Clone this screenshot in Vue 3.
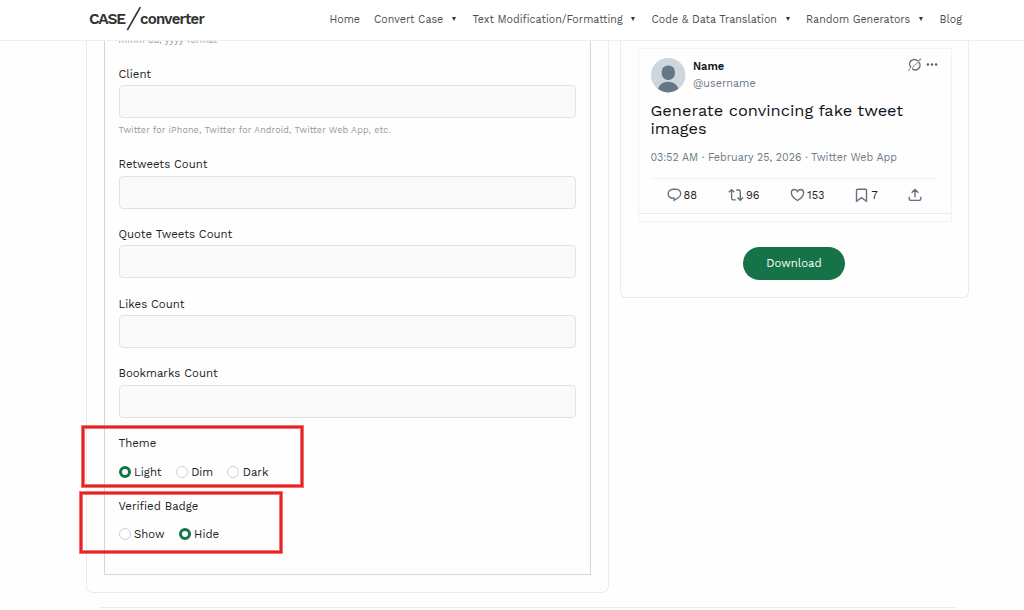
<script setup>
import { ref } from 'vue'

const navItems = [
  { label: 'Home', cls: 'home' },
  { label: 'Convert Case', cls: 'case', menu: true },
  { label: 'Text Modification/Formatting', cls: 'text', menu: true },
  { label: 'Code & Data Translation', cls: 'code', menu: true },
  { label: 'Random Generators', cls: 'random', menu: true },
  { label: 'Blog', cls: 'blog' }
]

const fields = ref([
  { id: 'client', label: 'Client', value: '', hint: 'Twitter for iPhone, Twitter for Android, Twitter Web App, etc.' },
  { id: 'retweets', label: 'Retweets Count', value: '' },
  { id: 'quotes', label: 'Quote Tweets Count', value: '' },
  { id: 'likes', label: 'Likes Count', value: '' },
  { id: 'bookmarks', label: 'Bookmarks Count', value: '' }
])

const theme = ref('Light')
const badge = ref('Hide')
</script>

<template>
  <div class="page">
    <header class="header">
      <a class="logo">
        <span class="logo-case">CASE</span>
        <svg class="logo-slash" width="16" height="26" viewBox="0 0 16 26">
          <path d="M1.3 24.2 14.3 1.2" stroke="#333" stroke-width="1.7" fill="none" />
        </svg>
        <span class="logo-conv">converter</span>
      </a>
      <nav class="nav">
        <a v-for="item in navItems" :key="item.label" class="nav-item" :class="item.cls">
          <span>{{ item.label }}</span>
          <i v-if="item.menu" class="caret"></i>
        </a>
      </nav>
    </header>

    <main class="main">
      <div class="columns">
        <section class="card form-card">
          <form class="form" @submit.prevent>
            <p class="hint date-hint">mmm dd, yyyy format</p>
            <div v-for="f in fields" :key="f.id" class="field">
              <label :for="f.id">{{ f.label }}</label>
              <input :id="f.id" v-model="f.value" type="text">
              <p v-if="f.hint" class="hint">{{ f.hint }}</p>
            </div>
            <div class="group">
              <div>Theme</div>
              <div class="radios">
                <label v-for="t in ['Light', 'Dim', 'Dark']" :key="t" class="radio">
                  <input v-model="theme" type="radio" name="theme" :value="t">{{ t }}
                </label>
              </div>
            </div>
            <div class="group">
              <div>Verified Badge</div>
              <div class="radios">
                <label v-for="b in ['Show', 'Hide']" :key="b" class="radio">
                  <input v-model="badge" type="radio" name="badge" :value="b">{{ b }}
                </label>
              </div>
            </div>
          </form>
        </section>

        <section class="card preview-card">
          <div class="preview">
            <article class="tweet">
              <div class="tweet-head">
                <svg class="avatar" width="35" height="35" viewBox="0 0 35 35">
                  <defs>
                    <clipPath id="avatar-clip"><circle cx="17.2" cy="17.2" r="17.2" /></clipPath>
                  </defs>
                  <g clip-path="url(#avatar-clip)">
                    <rect width="35" height="35" fill="#ccd6dc" />
                    <rect x="10.7" y="7.5" width="13.2" height="14.4" rx="6.3" fill="#657786" />
                    <path d="M6.2 35C6.7 27.4 11.2 23.8 17.2 23.8S27.7 27.4 28.2 35Z" fill="#657786" />
                  </g>
                </svg>
                <div class="names">
                  <strong>Name</strong>
                  <span>@username</span>
                </div>
                <div class="head-icons">
                  <svg width="14" height="14" viewBox="0 0 14 14" fill="none" stroke="#607080">
                    <path d="M9.6 2.8A4.6 4.6 0 0 0 3 9.4M4.2 10.6A4.6 4.6 0 0 0 10.8 4.2" stroke-width="1.5" />
                    <path d="M.6 13C1.1 11.3 1.8 10.3 3 9.2M4.4 9.6 9.8 4.4C11.4 3.2 12.2 2.2 12.8.8L9.4 3.4" stroke-width=".8" />
                  </svg>
                  <svg width="12" height="4" viewBox="0 0 12 4" fill="#536471">
                    <circle cx="1.9" cy="1.5" r="1.25" />
                    <circle cx="6" cy="1.5" r="1.25" />
                    <circle cx="10.1" cy="1.5" r="1.25" />
                  </svg>
                </div>
              </div>
              <p class="tweet-text">Generate convincing fake tweet<br>images</p>
              <p class="tweet-meta">03:52 AM · February 25, 2026 · Twitter Web App</p>
              <div class="stats">
                <span class="stat">
                  <svg width="15" height="14" viewBox="0 0 15 14">
                    <path d="M6 1.2H9C11.8 1.2 13.7 3.2 13.7 5.7C13.7 7.5 12.8 8.8 11.2 9.8L7.1 12.3V10.2H6C3.2 10.2 1.2 8.2 1.2 5.7S3.2 1.2 6 1.2Z" />
                  </svg>88
                </span>
                <span class="stat">
                  <svg width="16" height="14" viewBox="0 0 16 14">
                    <path d="M.8 4.3 3.6 1.6 6.4 4.3M3.6 1.8V10.2Q3.6 11.9 5.3 11.9H7.8M8.2 2H10.6Q12.3 2 12.3 3.7V12.1M9.5 9.5 12.3 12.2 15.1 9.5" />
                  </svg>96
                </span>
                <span class="stat">
                  <svg width="15" height="14" viewBox="0 0 15 14">
                    <path d="M7.5 12.5C4.3 10.6 1.4 8 1.4 4.9C1.4 2.9 2.7 1.5 4.4 1.5C5.8 1.5 6.8 2.2 7.5 3.5C8.2 2.2 9.2 1.5 10.6 1.5C12.3 1.5 13.6 2.9 13.6 4.9C13.6 8 10.7 10.6 7.5 12.5Z" />
                  </svg>153
                </span>
                <span class="stat bookmark">
                  <svg width="13" height="15" viewBox="0 0 13 15">
                    <path d="M1.5 2.4Q1.5 1.2 2.7 1.2H10.3Q11.5 1.2 11.5 2.4V13.3L6.5 9.7 1.5 13.3Z" />
                  </svg>7
                </span>
                <span class="stat">
                  <svg width="14" height="14" viewBox="0 0 14 14">
                    <path d="M3.6 4.7 7 1.4 10.4 4.7M7 1.6V9.3M1.2 8.8V10.8Q1.2 12.3 2.7 12.3H11.3Q12.8 12.3 12.8 10.8V8.8" />
                  </svg>
                </span>
              </div>
            </article>
          </div>
          <button class="download">Download</button>
        </section>
      </div>
      <hr class="divider">
    </main>

    <!-- highlight frames over the two radio groups -->
    <div class="frame frame-theme"></div>
    <div class="frame frame-badge"></div>
  </div>
</template>

<style>
body {
  background: #fefefe;
}
</style>

<style scoped>
* {
  box-sizing: border-box;
}

.page {
  position: relative;
  display: flex;
  flex-direction: column;
  height: 610px;
  overflow: hidden;
  font-family: "Work Sans", Inter, "Liberation Sans", sans-serif;
  font-size: 11.4px;
  color: #222;
}

p {
  margin: 0;
}

.header {
  flex: none;
  display: flex;
  height: 41px;
  padding-left: 89px;
  border-bottom: 1px solid #efefef;
  background: #fff;
}

.logo {
  display: flex;
  align-items: center;
  width: 240.5px;
  height: 38px;
  color: #333;
  font-weight: 600;
  white-space: nowrap;
}

.logo-case {
  width: 37px;
  font-size: 15.5px;
  letter-spacing: -1.25px;
}

.logo-slash {
  flex: none;
  margin-right: -2px;
}

.logo-conv {
  font-size: 15px;
  letter-spacing: -0.75px;
}

.nav {
  display: flex;
  align-items: center;
  height: 38px;
}

.nav-item {
  display: flex;
  align-items: center;
  justify-content: space-between;
  color: #4d4d4d;
  font-size: 10.7px;
  white-space: nowrap;
}

.home { width: 30px; margin-right: 14.5px; }
.case { width: 82px; margin-right: 16.5px; }
.text { width: 162.5px; margin-right: 16.5px; }
.code { width: 138px; margin-right: 16.5px; }
.random { width: 117px; margin-right: 16.5px; }

.caret {
  border: 2.5px solid transparent;
  border-top: 4px solid #333;
  border-bottom: 0;
}

.main {
  flex: 1;
  min-height: 0;
  overflow: hidden;
}

.columns {
  display: flex;
  align-items: flex-start;
  gap: 11px;
  padding-left: 86px;
}

.card {
  border: 1px solid #e4ecf4;
  border-top: 0;
}

.form-card {
  width: 523px;
  height: 552px;
  padding: 0 17px 17px;
  border-radius: 0 0 7px 7px;
}

.form {
  display: flow-root;
  height: 534px;
  padding: 0 13.5px;
  border: 1px solid #d5d5d5;
  border-top: 0;
}

.hint {
  color: #999;
  font-size: 9px;
  line-height: 12px;
  letter-spacing: 0.12px;
}

.date-hint {
  margin-top: -7px;
}

.field {
  height: 69.75px;
}

.date-hint + .field {
  height: 90.5px;
  margin-top: 19.5px;
}

.field label {
  display: block;
  height: 19.5px;
  line-height: 16px;
}

.field input {
  display: block;
  width: 457.5px;
  height: 33px;
  padding: 0 8px;
  border: 1px solid #e2e2e2;
  border-radius: 4px;
  background: #fafafa;
  font: inherit;
  outline: none;
}

.field .hint {
  margin-top: 6px;
}

.group {
  height: 62.75px;
  line-height: 16px;
}

.radios {
  display: flex;
  gap: 14px;
  margin-top: 12.5px;
}

.radio {
  display: flex;
  align-items: center;
  gap: 3.5px;
}

.radio input {
  appearance: none;
  width: 12px;
  height: 12px;
  margin: 0;
  border: 1px solid #c9d1d9;
  border-radius: 50%;
  background: #fff;
}

.radio input:checked {
  border: 3.5px solid #157347;
}

.preview-card {
  display: flex;
  flex-direction: column;
  align-items: center;
  width: 349px;
  height: 257px;
  padding-top: 7px;
  border-radius: 0 0 6px 6px;
}

.preview {
  width: 314px;
  height: 174px;
  border: 1px solid #f1f4f6;
}

.tweet {
  height: 165px;
  padding: 8.5px 13px 0 12px;
  border-bottom: 1px solid #e6eef0;
}

.tweet-head {
  display: flex;
}

.names {
  display: flex;
  flex-direction: column;
  margin-left: 7.5px;
  line-height: 17px;
}

.names strong {
  color: #0f1419;
  font-size: 11px;
  font-weight: 600;
}

.names span {
  color: #6b7a86;
  font-size: 10.8px;
}

.head-icons {
  display: flex;
  align-items: center;
  gap: 4px;
  height: 15px;
  margin-left: auto;
}

.tweet-text {
  margin-top: 9.5px;
  color: #0f1419;
  font-size: 16.4px;
  line-height: 17.5px;
  white-space: nowrap;
}

.tweet-meta {
  margin-top: 12.5px;
  color: #6b7a86;
  font-size: 10.7px;
  line-height: 16px;
  white-space: nowrap;
}

.stats {
  display: flex;
  align-items: center;
  justify-content: space-between;
  height: 34px;
  margin-top: 12px;
  padding: 0 15px 0 16px;
  border-top: 1px solid #eff3f4;
}

.stat {
  display: flex;
  align-items: center;
  gap: 2px;
  font-size: 11px;
}

.stat.bookmark {
  gap: 3px;
}

.stat svg {
  fill: none;
  stroke: #607080;
  stroke-width: 1.35;
}

.download {
  width: 102px;
  height: 33px;
  margin: 25px 1px 0 0;
  padding: 0 0 1px;
  border: 0;
  border-radius: 17px;
  background: #157347;
  color: #fff;
  font-family: inherit;
  font-size: 11.4px;
}

.divider {
  width: 857px;
  margin: 14px 0 0 99px;
  border: 0;
  border-top: 1px solid #ececec;
}

.frame {
  position: absolute;
  border: 2px solid #e62222;
  box-shadow: 0 0 0 1px rgba(232, 42, 42, 0.65), inset 0 0 0 1px rgba(232, 42, 42, 0.65);
  pointer-events: none;
}

.frame-theme {
  top: 426px;
  left: 82px;
  width: 221px;
  height: 61px;
}

.frame-badge {
  top: 492px;
  left: 80px;
  width: 202px;
  height: 61px;
}
</style>
